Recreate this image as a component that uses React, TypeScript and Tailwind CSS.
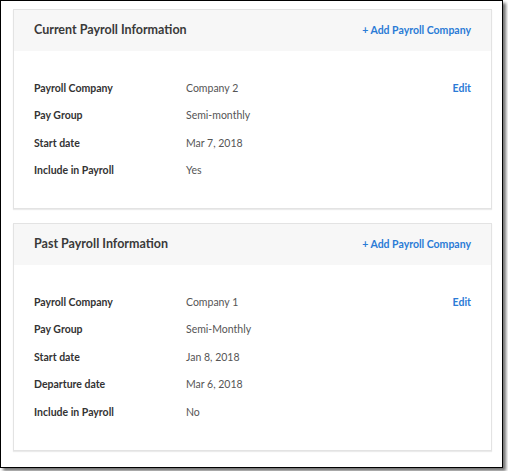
import React from "react";

type Row = { label: string; value: string };

const current: Row[] = [
  { label: "Payroll Company", value: "Company 2" },
  { label: "Pay Group", value: "Semi-monthly" },
  { label: "Start date", value: "Mar 7, 2018" },
  { label: "Include in Payroll", value: "Yes" },
];

const past: Row[] = [
  { label: "Payroll Company", value: "Company 1" },
  { label: "Pay Group", value: "Semi-Monthly" },
  { label: "Start date", value: "Jan 8, 2018" },
  { label: "Departure date", value: "Mar 6, 2018" },
  { label: "Include in Payroll", value: "No" },
];

const PayrollCard: React.FC<{ title: string; rows: Row[] }> = ({ title, rows }) => (
  <section className="border border-[#e3e3e3] bg-white shadow-[0_1px_1px_rgba(0,0,0,0.08)]">
    <header className="flex h-[41px] items-center justify-between bg-[#f7f7f7] pl-[20px] pr-[20px]">
      <h2 className="text-[12.5px] font-bold text-[#3a3a3a]">{title}</h2>
      <a className="text-[10.5px] font-bold text-[#2a7bd6]">+ Add Payroll Company</a>
    </header>
    <div className="flex pb-[23px] pl-[20px] pr-[20px] pt-[24px]">
      <div className="flex-1">
        {rows.map((r) => (
          <div key={r.label} className="flex h-[27.5px] items-center text-[10.5px]">
            <span className="w-[152px] font-bold text-[#333]">{r.label}</span>
            <span className="text-[#555]">{r.value}</span>
          </div>
        ))}
      </div>
      <div className="flex h-[27.5px] items-center text-[10.5px] font-bold text-[#2a7bd6]">Edit</div>
    </div>
  </section>
);

export default function App() {
  return (
    <div className="h-[471px] w-[508px] bg-white font-['Lato',sans-serif]">
      <div className="flex h-[468px] w-[503px] flex-col gap-[14px] border border-black bg-white pl-[12px] pr-[10px] pt-[8px] shadow-[3px_3px_3px_rgba(0,0,0,0.55)]">
        <PayrollCard title="Current Payroll Information" rows={current} />
        <PayrollCard title="Past Payroll Information" rows={past} />
      </div>
    </div>
  );
}
